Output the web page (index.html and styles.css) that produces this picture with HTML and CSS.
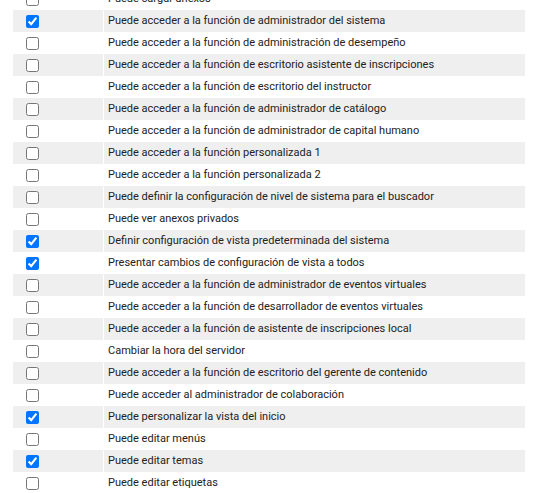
FILE: index.html
```html
<!DOCTYPE html>
<html lang="es">
<head>
<meta charset="utf-8">
<link rel="stylesheet" href="styles.css">
</head>
<body>
<table class="perms">
<colgroup><col class="c1"><col class="c2"></colgroup>
<tbody>
<tr><td class="chk"><input type="checkbox"></td><td class="lbl">Puede cargar anexos</td></tr>
<tr><td class="chk"><input type="checkbox" checked></td><td class="lbl">Puede acceder a la función de administrador del sistema</td></tr>
<tr><td class="chk"><input type="checkbox"></td><td class="lbl">Puede acceder a la función de administración de desempeño</td></tr>
<tr><td class="chk"><input type="checkbox"></td><td class="lbl">Puede acceder a la función de escritorio asistente de inscripciones</td></tr>
<tr><td class="chk"><input type="checkbox"></td><td class="lbl">Puede acceder a la función de escritorio del instructor</td></tr>
<tr><td class="chk"><input type="checkbox"></td><td class="lbl">Puede acceder a la función de administrador de catálogo</td></tr>
<tr><td class="chk"><input type="checkbox"></td><td class="lbl">Puede acceder a la función de administrador de capital humano</td></tr>
<tr><td class="chk"><input type="checkbox"></td><td class="lbl">Puede acceder a la función personalizada 1</td></tr>
<tr><td class="chk"><input type="checkbox"></td><td class="lbl">Puede acceder a la función personalizada 2</td></tr>
<tr><td class="chk"><input type="checkbox"></td><td class="lbl">Puede definir la configuración de nivel de sistema para el buscador</td></tr>
<tr><td class="chk"><input type="checkbox"></td><td class="lbl">Puede ver anexos privados</td></tr>
<tr><td class="chk"><input type="checkbox" checked></td><td class="lbl">Definir configuración de vista predeterminada del sistema</td></tr>
<tr><td class="chk"><input type="checkbox" checked></td><td class="lbl">Presentar cambios de configuración de vista a todos</td></tr>
<tr><td class="chk"><input type="checkbox"></td><td class="lbl">Puede acceder a la función de administrador de eventos virtuales</td></tr>
<tr><td class="chk"><input type="checkbox"></td><td class="lbl">Puede acceder a la función de desarrollador de eventos virtuales</td></tr>
<tr><td class="chk"><input type="checkbox"></td><td class="lbl">Puede acceder a la función de asistente de inscripciones local</td></tr>
<tr><td class="chk"><input type="checkbox"></td><td class="lbl">Cambiar la hora del servidor</td></tr>
<tr><td class="chk"><input type="checkbox"></td><td class="lbl">Puede acceder a la función de escritorio del gerente de contenido</td></tr>
<tr><td class="chk"><input type="checkbox"></td><td class="lbl">Puede acceder al administrador de colaboración</td></tr>
<tr><td class="chk"><input type="checkbox" checked></td><td class="lbl">Puede personalizar la vista del inicio</td></tr>
<tr><td class="chk"><input type="checkbox"></td><td class="lbl">Puede editar menús</td></tr>
<tr><td class="chk"><input type="checkbox" checked></td><td class="lbl">Puede editar temas</td></tr>
<tr><td class="chk"><input type="checkbox"></td><td class="lbl">Puede editar etiquetas</td></tr>
</tbody>
</table>
</body>
</html>
```
FILE: styles.css
```css
html, body {
  margin: 0;
  padding: 0;
  background: #fff;
}
body {
  padding: 0 34px 0 13px;
  font-family: Roboto, "Liberation Sans", Arial, sans-serif;
  font-size: 11px;
  color: #222;
  overflow: hidden;
}
.perms {
  width: 512px;
  margin-top: -12px;
  table-layout: fixed;
  border-collapse: separate;
  border-spacing: 0;
}
.c1 {
  width: 91px;
}
.perms tr {
  height: 22px;
}
.perms tr:nth-child(even) {
  background: #efefef;
}
.perms td {
  padding: 0;
  vertical-align: middle;
}
.perms .chk {
  border-right: 1px solid #fff;
  line-height: 0;
}
.chk input {
  margin: 0 0 0 13px;
  width: 13px;
  height: 13px;
  vertical-align: middle;
}
.perms .lbl {
  padding-left: 4px;
  line-height: 14px;
  white-space: nowrap;
}
```
